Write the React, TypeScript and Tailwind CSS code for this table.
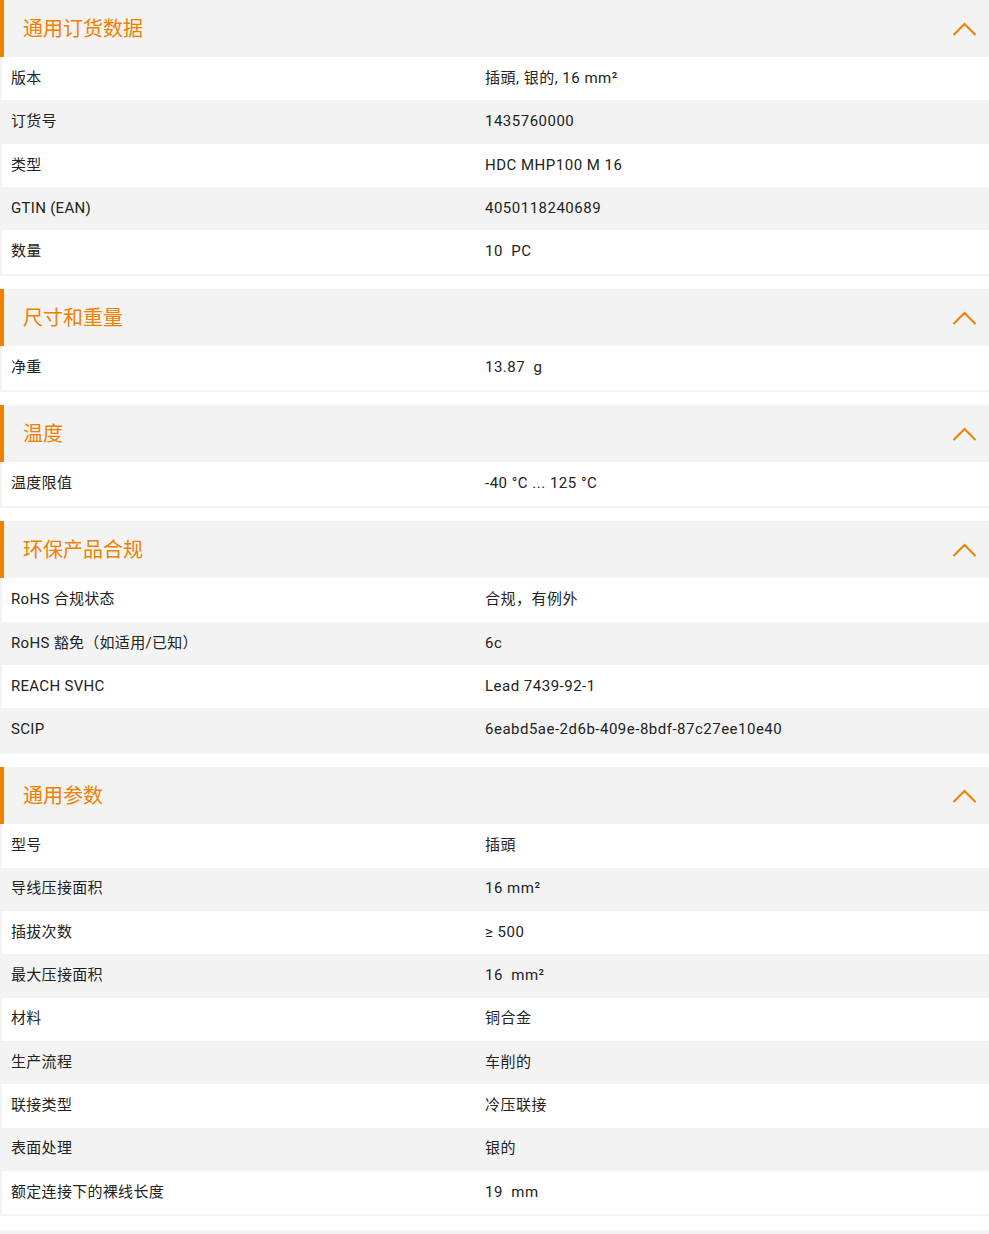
const sections: { title: string; rows: [string, string][] }[] = [
  {
    title: "通用订货数据",
    rows: [
      ["版本", "插頭, 银的, 16 mm²"],
      ["订货号", "1435760000"],
      ["类型", "HDC MHP100 M 16"],
      ["GTIN (EAN)", "4050118240689"],
      ["数量", "10  PC"],
    ],
  },
  { title: "尺寸和重量", rows: [["净重", "13.87  g"]] },
  { title: "温度", rows: [["温度限值", "-40 °C ... 125 °C"]] },
  {
    title: "环保产品合规",
    rows: [
      ["RoHS 合规状态", "合规，有例外"],
      ["RoHS 豁免（如适用/已知）", "6c"],
      ["REACH SVHC", "Lead 7439-92-1"],
      ["SCIP", "6eabd5ae-2d6b-409e-8bdf-87c27ee10e40"],
    ],
  },
  {
    title: "通用参数",
    rows: [
      ["型号", "插頭"],
      ["导线压接面积", "16 mm²"],
      ["插拔次数", "≥ 500"],
      ["最大压接面积", "16  mm²"],
      ["材料", "铜合金"],
      ["生产流程", "车削的"],
      ["联接类型", "冷压联接"],
      ["表面处理", "银的"],
      ["额定连接下的裸线长度", "19  mm"],
    ],
  },
];

function Chevron() {
  return (
    <svg width="25" height="14" viewBox="0 0 25 14" fill="none" className="mr-[12px]">
      <polyline points="1.5,13 12.5,2 23.5,13" stroke="#f08000" strokeWidth="2" />
    </svg>
  );
}

export default function App() {
  return (
    <div className="w-[989px] bg-white font-['Roboto','Noto_Sans_CJK_SC',sans-serif] text-[15px] text-[#222]">
      {sections.map((s) => (
        <section key={s.title} className="mb-[13.67px]">
          <div className="flex h-[57px] items-center justify-between border-l-4 border-[#f08000] bg-[#f3f3f3]">
            <h2 className="pl-[19px] text-[20px] text-[#f08000]">{s.title}</h2>
            <Chevron />
          </div>
          <div className="border-b-2 border-l-2 border-[#f3f3f3]">
            {s.rows.map(([k, v], i) => (
              <div
                key={k}
                className={`flex h-[43.33px] items-center pb-[1px] ${i % 2 === 1 ? "bg-[#f3f3f3]" : "bg-white"}`}
              >
                <div className="w-[483px] shrink-0 pl-[9px] tracking-[0.3px]">{k}</div>
                <div className="whitespace-pre tracking-[0.5px]">{v}</div>
              </div>
            ))}
          </div>
        </section>
      ))}
      <div className="h-[57px] bg-[#f3f3f3]" />
    </div>
  );
}
